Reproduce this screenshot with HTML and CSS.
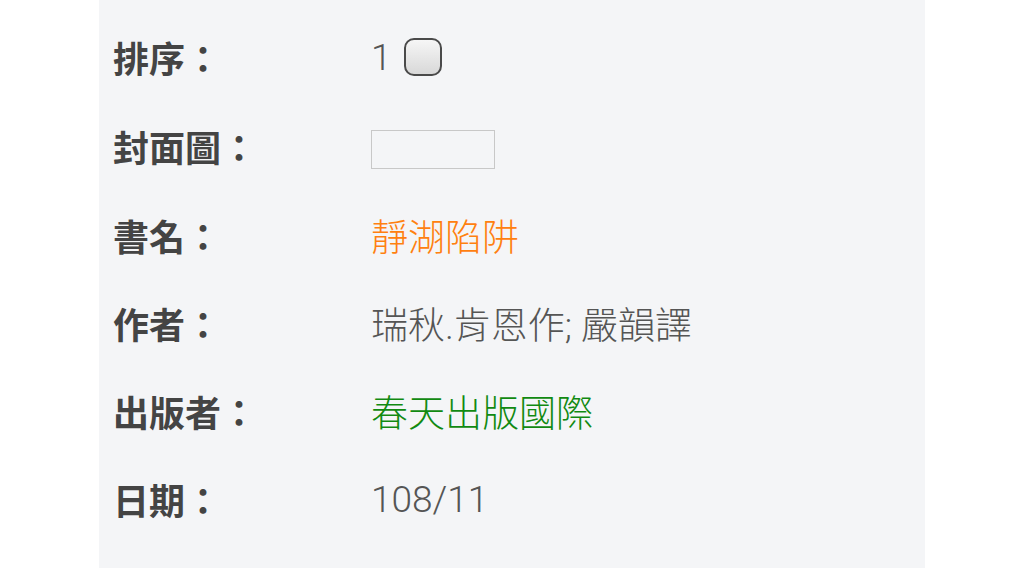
FILE: index.html
```html
<!DOCTYPE html>
<html lang="zh-Hant">
<head>
  <meta charset="UTF-8">
  <title>書籍資料</title>
  <link rel="stylesheet" href="styles.css">
</head>
<body>

  <div class="panel">
    <div class="row">
      <div class="label">排序：</div>
      <div class="value">1 <span class="check"></span></div>
    </div>
    <div class="row row-cover">
      <div class="label">封面圖：</div>
      <div class="value"><span class="cover"></span></div>
    </div>
    <div class="row">
      <div class="label">書名：</div>
      <div class="value title">靜湖陷阱</div>
    </div>
    <div class="row">
      <div class="label">作者：</div>
      <div class="value">瑞秋.肯恩作; 嚴韻譯</div>
    </div>
    <div class="row">
      <div class="label">出版者：</div>
      <div class="value publisher">春天出版國際</div>
    </div>
    <div class="row">
      <div class="label">日期：</div>
      <div class="value">108/11</div>
    </div>
  </div>

</body>
</html>
```

FILE: styles.css
```css
html, body {
  margin: 0;
  padding: 0;
  background: #fff;
}
body {
  font-family: Roboto, "Noto Sans CJK TC", "Noto Sans", sans-serif;
  font-size: 36px;
}
.panel {
  width: 826px;
  height: 568px;
  margin-left: 99px;
  padding: 13px 0 0 14px;
  box-sizing: border-box;
  background: #f4f5f7;
}
.row {
  display: flex;
  align-items: center;
  height: 88px;
}
.row-cover {
  height: 90px;
}
.label {
  width: 258px;
  font-family: "Noto Sans CJK TC", sans-serif;
  font-weight: bold;
  color: #444;
}
.value {
  display: flex;
  align-items: center;
  gap: 12px;
  font-size: 37px;
  color: #555;
  font-weight: 300;
}
.title {
  color: #ff8010;
}
.publisher {
  color: #118a11;
}
.check {
  display: inline-block;
  width: 34px;
  height: 34px;
  border: 2.5px solid #4a4a4a;
  border-radius: 10px;
  background: linear-gradient(#f6f6f6, #d8d8d8);
}
.cover {
  display: inline-block;
  width: 122px;
  height: 37px;
  margin-top: 6px;
  border: 1px solid #c8c8c8;
}
```
